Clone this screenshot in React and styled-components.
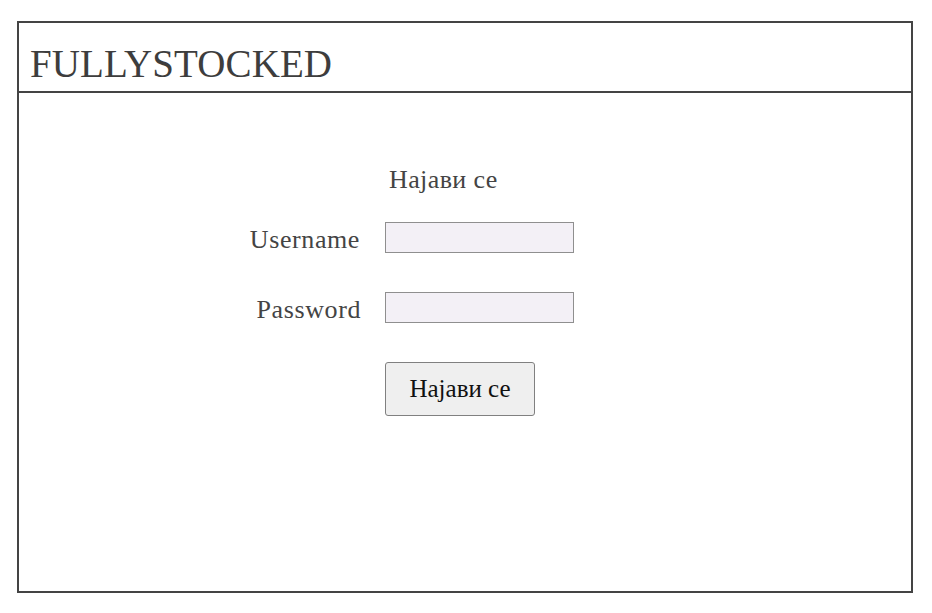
import React from "react";
import styled, { createGlobalStyle } from "styled-components";

const Global = createGlobalStyle`
  html, body { margin: 0; padding: 0; background: #fff; }
  body { font-family: "Liberation Serif", "DejaVu Serif", serif; }
`;

const Frame = styled.div`
  box-sizing: border-box;
  margin: 21px 0 0 17px;
  width: 896px;
  height: 572px;
  border: 2px solid #444;
  display: flex;
  flex-direction: column;
`;

const Header = styled.header`
  height: 68px;
  border-bottom: 2px solid #444;
  display: flex;
  align-items: center;
  padding-left: 11px;
`;

const Brand = styled.h1`
  margin: 0;
  padding-top: 12px;
  font-family: "Liberation Serif", serif;
  font-weight: normal;
  font-size: 39px;
  color: #3d3d3d;
  letter-spacing: 0.1px;
`;

const Main = styled.main`
  flex: 1;
  padding: 72px 0 0 210px;
`;

const Form = styled.form`
  display: grid;
  grid-template-columns: 132px 189px;
  column-gap: 24px;
  align-items: start;
`;

const Title = styled.div`
  grid-column: 2;
  padding-left: 4px;
  font-size: 26px;
  line-height: 30px;
  color: #444;
  margin-bottom: 27px;
  letter-spacing: 0.4px;
`;

const Label = styled.label`
  text-align: right;
  font-size: 26px;
  line-height: 30px;
  margin-top: 3px;
  color: #444;
  letter-spacing: 0.6px;
  padding-right: ${(p) => p.$pr || 0}px;
`;

const Input = styled.input`
  box-sizing: border-box;
  width: 189px;
  height: 31px;
  margin: 0 0 ${(p) => p.$mb || 0}px;
  border: 1px solid #8f8f8f;
  background: #f3f0f6;
  font-family: inherit;
  font-size: 16px;
  padding: 2px 4px;
  outline: none;
`;

const Button = styled.button`
  grid-column: 2;
  justify-self: start;
  box-sizing: border-box;
  width: 150px;
  height: 54px;
  border: 1px solid #808080;
  border-radius: 3px;
  background: #efefef;
  font-family: "Liberation Serif", serif;
  font-size: 25px;
  color: #111;
  cursor: pointer;
  padding: 0;
`;

export default function App() {
  return (
    <>
      <Global />
      <Frame>
        <Header>
          <Brand>FULLYSTOCKED</Brand>
        </Header>
        <Main>
          <Form onSubmit={(e) => e.preventDefault()}>
            <Title>Најави се</Title>
            <Label htmlFor="u" $pr={1}>Username</Label>
            <Input id="u" type="text" $mb={39} />
            <Label htmlFor="p">Password</Label>
            <Input id="p" type="password" $mb={39} />
            <Button type="submit">Најави се</Button>
          </Form>
        </Main>
      </Frame>
    </>
  );
}
